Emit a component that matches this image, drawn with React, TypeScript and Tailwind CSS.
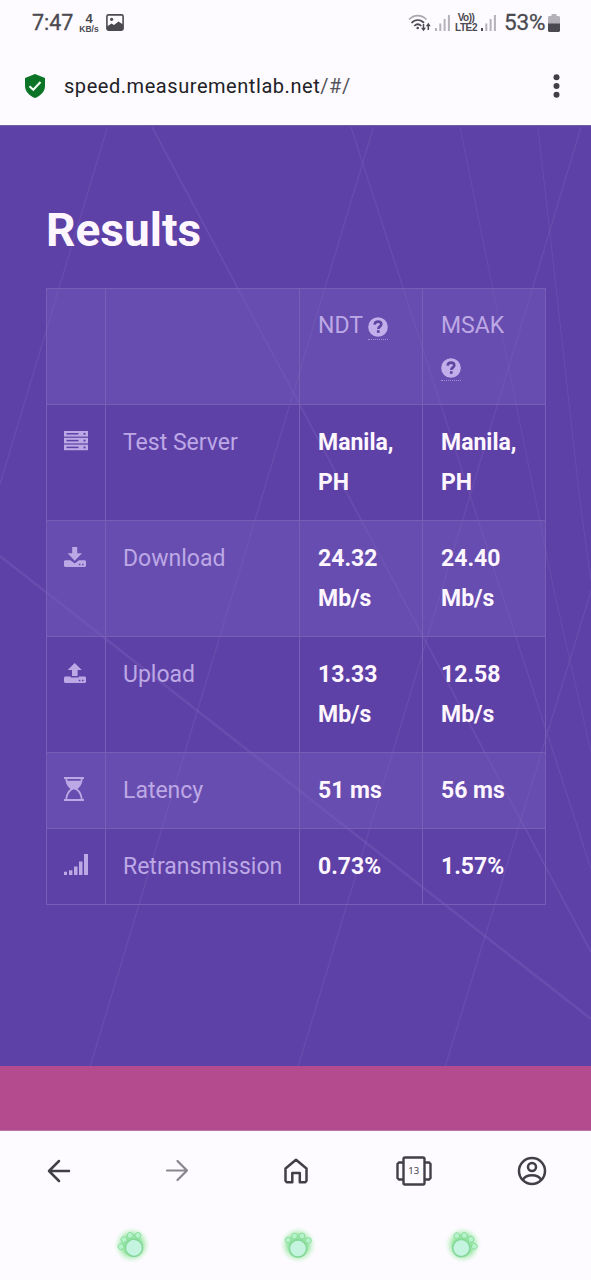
import React from 'react';

interface ResultRow {
  icon: React.ReactNode;
  label: string;
  ndt: string;
  msak: string;
}

const ServerIcon = () => (
  <svg width="24" height="20" viewBox="0 0 24 20">
    {[0, 6.8, 13.6].map(y => (
      <g key={y}>
        <rect y={y} width="24" height="5.6" fill="currentColor" />
        <path d={`M2.500 ${y + 2.8}h12`} stroke="#5e41a6" strokeWidth="1.500" />
        <path d={`M19.500 ${y + 2.8}h2`} stroke="#5e41a6" strokeWidth="1.800" />
      </g>
    ))}
  </svg>
);

const DownloadIcon = () => (
  <svg width="22" height="20" viewBox="0 0 22 20" fill="currentColor">
    <path d="M8.200 0h5v6.300h4.800L10.700 13.800 3.600 6.300h4.600z" />
    <path d="M1 13.300h5.400l4.300 3.200 4.300-3.200H21l1 1V19l-1 1H1l-1-1v-4.700z" />
    <path d="M14.800 17.500h1.600M18 17.500h1.600" stroke="#684eac" strokeWidth="1.400" />
  </svg>
);

const UploadIcon = () => (
  <svg width="22" height="20" viewBox="0 0 22 20" fill="currentColor">
    <path d="M10.700 0l7.100 7h-4.200v6H8V7H3.700z" />
    <path d="M1 13.500h5.600v1h8.300v-1H21l1 1v4.500l-1 1H1l-1-1v-4.500z" />
    <path d="M14.800 17.500h1.600M18 17.500h1.600" stroke="#5e41a6" strokeWidth="1.400" />
  </svg>
);

const HourglassIcon = () => (
  <svg width="20" height="24" viewBox="0 0 20 24" fill="none" stroke="currentColor">
    <path d="M0 1h20M0 23h20" strokeWidth="2" />
    <path d="M2.200 1c.2 6 2.800 9 5.600 11-2.800 2-5.400 5-5.600 11M17.800 1c-.2 6-2.800 9-5.600 11 2.800 2 5.400 5 5.600 11" strokeWidth="1.800" />
    <path d="M3 3.800h14c-.8 4-2.800 6.600-4.800 8.800H7.800C5.800 10.400 3.800 7.800 3 3.800z" fill="currentColor" stroke="none" />
  </svg>
);

const SignalIcon = () => (
  <svg width="24" height="21" viewBox="0 0 24 21" fill="currentColor">
    <path d="M0 17.700h3V21H0zM5 16.200h3.400V21H5zM10 12.500h3.500V21H10zM15 7.500h3.500V21H15zM20 0h4v21h-4z" />
  </svg>
);

const rows: ResultRow[] = [
  { icon: <ServerIcon />, label: 'Test Server', ndt: 'Manila, PH', msak: 'Manila, PH' },
  { icon: <DownloadIcon />, label: 'Download', ndt: '24.32 Mb/s', msak: '24.40 Mb/s' },
  { icon: <UploadIcon />, label: 'Upload', ndt: '13.33 Mb/s', msak: '12.58 Mb/s' },
  { icon: <HourglassIcon />, label: 'Latency', ndt: '51 ms', msak: '56 ms' },
  { icon: <SignalIcon />, label: 'Retransmission', ndt: '0.73%', msak: '1.57%' },
];

const Help = () => (
  <span className="-mt-1.5 inline-flex h-[24px] w-5 flex-col items-center border-b border-dotted border-[#bda8e6]/70 align-[-4px]">
    <svg className="mt-px" width="20" height="20" viewBox="0 0 20 20">
      <circle cx="10" cy="10" r="9.800" fill="#c2aeea" />
      <path d="M6.600 7.700C6.800 5.600 8.200 4.600 10 4.600c1.900 0 3.300 1 3.300 2.700 0 2.400-3 2.300-3 4.600" fill="none" stroke="#5f45a2" strokeWidth="2.600" />
      <rect x="8.900" y="13.200" width="2.700" height="2.600" fill="#5f45a2" />
    </svg>
  </span>
);

const StatusBar = () => (
  <div className="flex h-[45px] items-center justify-between pl-8 pr-[31px] text-[#4b4a50]">
    <div className="flex items-center">
      <span className="w-[47px] text-[21.500px] leading-none [-webkit-text-stroke:0.300px]">7:47</span>
      <div className="flex w-5 flex-col items-center font-['Liberation_Sans']">
        <span className="text-[13px] font-bold leading-[13px]">4</span>
        <span className="text-[8.500px] font-bold leading-[9px]">KB/s</span>
      </div>
      <svg className="ml-[7px]" width="18" height="17" viewBox="0 0 18 17">
        <rect x="0.900" y="0.900" width="16.200" height="15.200" rx="1.500" fill="none" stroke="currentColor" strokeWidth="1.600" />
        <path d="M1 12.500l4.500-3 2.500 1.500 4.500-3.500L17 10.500V16H1z" fill="currentColor" />
        <circle cx="5.600" cy="5.300" r="1.600" fill="currentColor" />
      </svg>
    </div>
    <div className="flex items-center">
      <svg width="23" height="18" viewBox="0 0 23 18" fill="none" stroke="currentColor" strokeWidth="1.700">
        <path d="M1 5.500C6 .2 13.500.2 18.500 5.500" stroke="#aaa8ae" />
        <path d="M3.500 9c3.600-4 9-4 12.500 0M6.300 12c2.200-2.200 4.800-2.200 7 0" />
        <circle cx="9.700" cy="14" r="1.300" fill="currentColor" stroke="none" />
        <path d="M15.500 10v5M20.300 16v-5" strokeWidth="1.500" />
        <path d="M13 13.800h5l-2.500 3.500zM17.800 12.300h5l-2.500-3.500z" fill="currentColor" stroke="none" />
      </svg>
      <svg className="ml-1" width="16" height="17" viewBox="0 0 16 17" fill="#b4b2b8">
        <path d="M0 14h2v3H0zM4.300 9.500h2V17h-2zM8.600 5h2v12h-2zM12.900 1h2v16h-2z" />
      </svg>
      <div className="ml-[3px] flex w-[24px] flex-col items-center font-['Liberation_Sans']">
        <span className="text-[10px] font-bold leading-[10px] tracking-[-0.500px]">Vo))</span>
        <span className="text-[10px] font-bold leading-[10px] tracking-[-0.400px]">LTE2</span>
      </div>
      <svg className="ml-[3px]" width="16" height="17" viewBox="0 0 16 17" fill="#b4b2b8">
        <path d="M0 14h2v3H0z" fill="#4b4a50" />
        <path d="M4.300 9.500h2V17h-2zM8.600 5h2v12h-2zM12.900 1h2v16h-2z" />
      </svg>
      <span className="ml-[7px] w-[44px] text-[22.500px] leading-none tracking-[-0.100px] [-webkit-text-stroke:0.300px]">53%</span>
      <svg width="12" height="18" viewBox="0 0 12 18">
        <path d="M3.500 0h5v2H11l1 1v7H0V3l1-1h2.500z" fill="#b4b2b8" />
        <path d="M0 9.500h12V17l-1 1H1l-1-1z" fill="#4b4a50" />
      </svg>
    </div>
  </div>
);

const AddressBar = () => (
  <div className="flex h-20 items-center pl-[25px] pr-[31px] pt-0.5">
    <svg width="20" height="24" viewBox="0 0 20 24">
      <path d="M10 0l10 4v8c0 5.500-4.500 10-10 12C4.500 22 0 17.500 0 12V4z" fill="#0b7426" />
      <path d="M4.500 12.200l3.800 3.500 7.200-7.700" fill="none" stroke="#f2fff2" strokeWidth="2.100" />
    </svg>
    <span className="ml-[19px] flex-1 whitespace-nowrap text-[20px] tracking-[0.550px] text-[#222126]">
      speed.measurementlab.net<span className="text-[#55535a]">/#/</span>
    </span>
    <svg width="7" height="24" viewBox="0 0 7 24" fill="#424047">
      <circle cx="3.500" cy="3.300" r="3" />
      <circle cx="3.500" cy="12" r="3" />
      <circle cx="3.500" cy="20.700" r="3" />
    </svg>
  </div>
);

// Faint crossing lines behind the results
const Backdrop = () => (
  <svg className="absolute inset-0" width="591" height="940" viewBox="0 125 591 940" fill="none" stroke="#a98ad8" strokeOpacity="0.150">
    <path d="M107.500 126L0 483M373.500 126L90 1066M351 126l240 742M581 126L298 1066M591 590L445 1066" strokeWidth="1.300" />
    <path d="M460 126l94 464 37 161M538 126l42 374 11 80" strokeWidth="1" />
    <path d="M152 126l439 825" strokeWidth="1.800" />
    <path d="M0 555l591 463" strokeWidth="2.600" />
  </svg>
);

interface PawProps {
  className?: string;
}

const Paw: React.FC<PawProps> = ({ className }) => (
  <svg className={className} width="38" height="38" viewBox="0 0 38 38">
    <defs>
      <radialGradient id="glow">
        <stop offset="0" stopColor="#7ee08f" />
        <stop offset="0.550" stopColor="#93e49e" stopOpacity="0.900" />
        <stop offset="1" stopColor="#dff9e2" stopOpacity="0" />
      </radialGradient>
    </defs>
    <circle cx="19" cy="19" r="18.500" fill="url(#glow)" />
    <g fill="#b5f3cb" stroke="#84d897" strokeWidth="0.800">
      <circle cx="19" cy="22.500" r="8.600" fill="#c4f4df" strokeWidth="1.600" />
      <circle cx="9" cy="14" r="2.900" />
      <circle cx="15.500" cy="10" r="2.900" />
      <circle cx="23" cy="10" r="2.900" />
      <circle cx="29.500" cy="14.500" r="2.900" />
    </g>
  </svg>
);

const BottomBar = () => (
  <div className="h-[149px] bg-[#fdfbff] text-[#424047]">
    <nav className="flex h-20 items-center justify-around">
      <button className="flex w-[118px] justify-center">
        <svg width="24" height="24" viewBox="0 0 24 24" fill="none" stroke="currentColor" strokeWidth="2.500" strokeLinecap="round" strokeLinejoin="round">
          <path d="M22 12H2M12 2L2 12l10 10" />
        </svg>
      </button>
      <button className="flex w-[118px] justify-center text-[#89878d]">
        <svg width="24" height="24" viewBox="0 0 24 24" fill="none" stroke="currentColor" strokeWidth="2.200" strokeLinecap="round" strokeLinejoin="round">
          <path d="M2 11.500h20M12.500 2l9.500 9.500-9.500 9.500" />
        </svg>
      </button>
      <button className="flex w-[118px] justify-center pl-px">
        <svg width="24" height="26" viewBox="0 0 24 26" fill="none" stroke="currentColor" strokeWidth="2.500" strokeLinejoin="round">
          <path d="M1.500 10.500L12 1.700l10.500 8.800v12.300L21 24.300h-5.200V15H8.300v9.300H3l-1.500-1.500z" />
        </svg>
      </button>
      <button className="flex w-[118px] justify-center">
        <span className="grid">
          <svg className="col-start-1 row-start-1" width="36" height="30" viewBox="0 0 36 30" fill="none" stroke="currentColor" strokeWidth="2.400">
            <rect x="7.500" y="1.500" width="21" height="27" rx="1.500" />
            <path d="M7.500 6.500H3L1.500 8v14L3 23.500h4.500M28.500 6.500H33L34.500 8v14L33 23.500h-4.500" />
          </svg>
          <span className="col-start-1 row-start-1 self-center text-center font-['Noto_Sans',sans-serif] text-[9.500px] leading-none">13</span>
        </span>
      </button>
      <button className="flex w-[118px] justify-center">
        <svg width="30" height="30" viewBox="0 0 30 30" fill="none" stroke="currentColor" strokeWidth="2.500">
          <circle cx="15" cy="15" r="13" />
          <circle cx="15" cy="11" r="4" />
          <path d="M5.700 24c1.900-3.300 5-4.700 9.300-4.700s7.400 1.400 9.300 4.700" />
        </svg>
      </button>
    </nav>
    <div className="flex justify-between pl-[113px] pr-[109px] pt-[15px]">
      <Paw className="-rotate-35" />
      <Paw />
      <Paw className="rotate-30" />
    </div>
  </div>
);

const App: React.FC = () => {
  return (
    <div className="h-[1280px] w-[591px] overflow-hidden bg-[#fdfbff] font-[Roboto,sans-serif]">
      <StatusBar />
      <AddressBar />

      <main className="relative h-[941px] border-t border-[#6f5f9f] bg-[#5e41a6]">
        <Backdrop />
        <div className="relative px-[46px] pt-[76px]">
          <h1 className="text-[46px] font-bold leading-[56px] text-[#fdf6ff]">Results</h1>

          <table className="mt-[30px] w-[500px] table-fixed border-collapse text-[23px] leading-[40.500px] text-[#bda8e6]">
            <colgroup>
              <col className="w-[59px]" />
              <col className="w-[194px]" />
              <col className="w-[123px]" />
              <col className="w-[123px]" />
            </colgroup>
            <tbody>
              <tr className="h-[116px] bg-[#745dba]/45 align-top">
                <td className="border border-[#775eb7]" />
                <td className="border border-[#775eb7]" />
                <td className="border border-[#775eb7] pl-[18px] pr-4 pt-[17px]">NDT <Help /></td>
                <td className="border border-[#775eb7] pl-[18px] pr-[18px] pt-[17px]">MSAK<br /><Help /></td>
              </tr>
              {rows.map((row, i) => (
                <tr key={row.label} className={`align-top ${i < 3 ? 'h-[116px]' : 'h-[76px]'} ${i % 2 === 1 ? 'bg-[#745dba]/45' : ''}`}>
                  <td className="border border-[#775eb7] px-[17px] pt-[17px]">
                    <div className="flex h-[37px] items-center">{row.icon}</div>
                  </td>
                  <td className="border border-[#775eb7] pl-[17px] pr-4 pt-[18px]">{row.label}</td>
                  <td className="border border-[#775eb7] pl-[18px] pr-4 pt-[17.500px] font-bold text-[#fdf6ff]">{row.ndt}</td>
                  <td className="border border-[#775eb7] pl-[18px] pr-4 pt-[17.500px] font-bold text-[#fdf6ff]">{row.msak}</td>
                </tr>
              ))}
            </tbody>
          </table>
        </div>
      </main>

      <div className="h-[65px] border-b border-[#b877a8] bg-[#b54b8f]" />
      <BottomBar />
    </div>
  );
};

export default App;
